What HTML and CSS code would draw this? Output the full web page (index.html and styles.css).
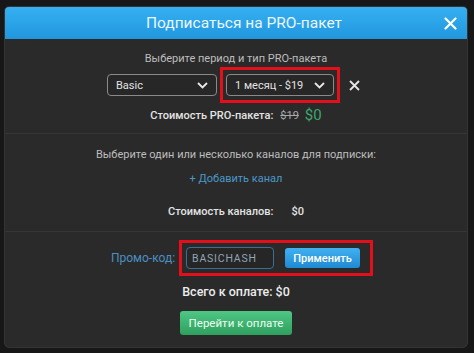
FILE: index.html
```html
<!DOCTYPE html>
<html>
<head>
  <meta charset="UTF-8">
  <link rel="stylesheet" href="styles.css">
</head>
<body>
  <div class="modal">
    <div class="header">
      <h1>Подписаться на PRO-пакет</h1>
      <span class="close">
        <svg width="13" height="13" viewBox="0 0 13 13"><path d="M1.5 1.5 L11.5 11.5 M11.5 1.5 L1.5 11.5" stroke="#ffffff" stroke-width="2.2" stroke-linecap="round"/></svg>
      </span>
    </div>

    <div class="section plan">
      <div class="hint">Выберите период и тип PRO-пакета</div>
      <div class="select-row">
        <div class="select">
          <span>Basic</span>
          <svg class="chevron" width="11" height="7" viewBox="0 0 11 7"><path d="M1 1 L5.5 5.5 L10 1" stroke="#e8e8e8" stroke-width="1.8" fill="none"/></svg>
        </div>
        <div class="mark">
          <div class="select">
            <span>1 месяц - $19</span>
            <svg class="chevron" width="11" height="7" viewBox="0 0 11 7"><path d="M1 1 L5.5 5.5 L10 1" stroke="#e8e8e8" stroke-width="1.8" fill="none"/></svg>
          </div>
        </div>
        <span class="remove">
          <svg width="11" height="11" viewBox="0 0 11 11"><path d="M1 1 L10 10 M10 1 L1 10" stroke="#e6e6e6" stroke-width="1.8"/></svg>
        </span>
      </div>
      <div class="cost">
        Стоимость PRO-пакета:
        <span class="old">$19</span>
        <span class="new">$0</span>
      </div>
    </div>

    <div class="section channels">
      <div class="hint">Выберите один или несколько каналов для подписки:</div>
      <a href="#" class="add-link">+ Добавить канал</a>
      <div class="cost">Стоимость каналов: <span class="sum">$0</span></div>
    </div>

    <div class="section checkout">
      <div class="promo-row">
        <span class="promo-label">Промо-код:</span>
        <div class="mark promo-mark">
          <div class="promo-input">BASICHASH</div>
          <button class="apply-btn">Применить</button>
        </div>
      </div>
      <div class="total">Всего к оплате: $0</div>
      <button class="pay-btn">Перейти к оплате</button>
    </div>
  </div>
</body>
</html>
```

FILE: styles.css
```css
* {
  margin: 0;
  padding: 0;
  box-sizing: border-box;
}

body {
  width: 474px;
  height: 353px;
  background: #171717;
  font-family: Roboto, 'Noto Sans', Arial, sans-serif;
  color: #d6d6d6;
  font-size: 11px;
  padding: 6px 6px 5px 4px;
  overflow: hidden;
}

.modal {
  width: 464px;
  height: 342px;
  background: #2a2a2a;
  border: 1px solid #343434;
  border-radius: 5px;
  overflow: hidden;
  display: flex;
  flex-direction: column;
}

.header {
  height: 32px;
  background: linear-gradient(180deg, #36b0f2 0%, #2196dd 100%);
  display: flex;
  align-items: center;
  justify-content: center;
  position: relative;
}

.header h1 {
  font-size: 15.5px;
  font-weight: 400;
  color: #eaf6ff;
  margin-left: 16px;
}

.close {
  position: absolute;
  right: 10px;
  top: 10px;
  display: flex;
}

.section {
  display: flex;
  flex-direction: column;
  align-items: center;
  border-bottom: 1px solid #353535;
}

.hint {
  color: #bdbdbd;
  font-size: 11px;
}

.plan {
  height: 95px;
  padding-top: 13px;
}

.select-row {
  display: flex;
  align-items: center;
  margin-top: 2px;
  margin-right: 5px;
}

.select {
  width: 110px;
  height: 22px;
  border: 1px solid #8a8a8a;
  border-radius: 4px;
  background: #272727;
  display: flex;
  align-items: center;
  justify-content: space-between;
  padding: 0 8px 0 8px;
  color: #e2e2e2;
  font-size: 11px;
}

.mark {
  border: 3px solid #e3101c;
  padding: 4px 3px 4px 3px;
  margin-left: 3px;
}

.mark .select {
  width: 108px;
}

.remove {
  display: flex;
  margin-left: 9px;
}

.cost {
  font-weight: 500;
  color: #e4e4e4;
  font-size: 11px;
  display: flex;
  align-items: center;
  gap: 6px;
}

.plan .cost {
  margin-top: 3px;
}

.old {
  color: #a8a8a8;
  font-weight: 400;
  text-decoration: line-through;
  margin-left: 1px;
}

.new {
  color: #3ea76a;
  font-size: 15px;
  font-weight: 400;
}

.channels {
  height: 98px;
  padding-top: 14px;
}

.add-link {
  color: #4b98c8;
  text-decoration: none;
  font-size: 11px;
  margin-top: 11px;
}

.channels .cost {
  margin-top: 20px;
  gap: 18px;
}

.checkout {
  border-bottom: none;
  padding-top: 8px;
}

.promo-row {
  display: flex;
  align-items: center;
  gap: 4px;
  margin-left: 12px;
}

.promo-label {
  color: #4a8fc2;
  font-size: 12px;
}

.promo-mark {
  display: flex;
  align-items: center;
  padding: 4px 10px 4px 4px;
  gap: 11px;
  margin-left: 0;
}

.promo-input {
  width: 88px;
  height: 22px;
  border: 1px solid #3b6f96;
  border-radius: 4px;
  background: #262626;
  color: #8fa4b4;
  font-size: 10.5px;
  letter-spacing: 0.8px;
  padding-left: 5px;
  display: flex;
  align-items: center;
}

.apply-btn {
  width: 75px;
  height: 20px;
  border: none;
  border-radius: 3px;
  background: linear-gradient(180deg, #41b1f0 0%, #1f89d2 100%);
  color: #ffffff;
  font-family: inherit;
  font-size: 11px;
  font-weight: 500;
}

.total {
  margin-top: 8px;
  color: #ececec;
  font-size: 12.5px;
  font-weight: 500;
}

.pay-btn {
  margin-top: 12px;
  width: 112px;
  height: 24px;
  border: none;
  border-radius: 3px;
  background: linear-gradient(180deg, #4fc784 0%, #2f9f5e 100%);
  color: #eafff0;
  font-family: inherit;
  font-size: 11.5px;
}
```
